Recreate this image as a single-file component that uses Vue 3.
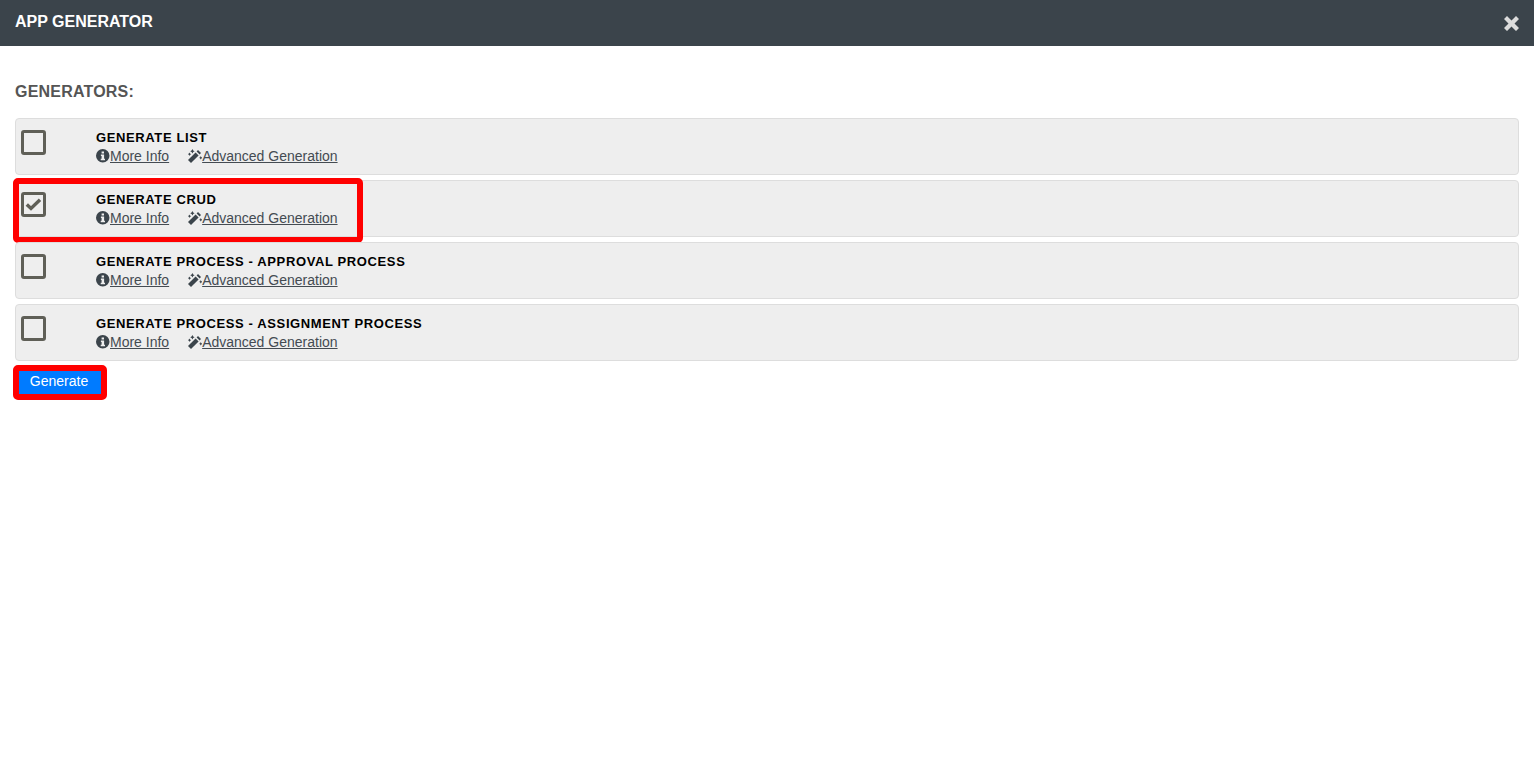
<script setup>
const generators = [
  { name: 'GENERATE LIST', checked: false },
  { name: 'GENERATE CRUD', checked: true, marked: true },
  { name: 'GENERATE PROCESS - APPROVAL PROCESS', checked: false },
  { name: 'GENERATE PROCESS - ASSIGNMENT PROCESS', checked: false },
]
</script>

<template>
  <div class="page">
    <header class="topbar">
      <h1 class="title">APP GENERATOR</h1>
      <svg class="close" viewBox="0 0 16 16" width="15" height="15">
        <path d="M0 3.2 3.2 0 8 4.8 12.8 0 16 3.2 11.2 8 16 12.8 12.8 16 8 11.2 3.2 16 0 12.8 4.8 8 0 3.2Z" />
      </svg>
    </header>

    <main class="body">
      <h2 class="section">GENERATORS:</h2>

      <div v-for="g in generators" :key="g.name" class="row">
        <span class="check">
          <svg v-if="g.checked" viewBox="0 0 19 19" width="19" height="19">
            <path d="M2.8 9.4 7 13.4 16 4.8" fill="none" stroke="#5f5f57" stroke-width="3.4" />
          </svg>
        </span>
        <div class="info">
          <div class="name">{{ g.name }}</div>
          <div class="links">
            <span class="link-item">
              <svg class="icon" viewBox="0 0 14 14" width="14" height="14">
                <path fill-rule="evenodd" d="M6.75 0a6.75 6.75 0 1 0 0 13.5A6.75 6.75 0 0 0 6.75 0ZM5.6 2.4h2.4v2.1H5.6V2.4ZM4.9 5.6h3.2v4.2h.9v1.5H4.7V9.8h.9V7.1h-.7V5.6Z" />
              </svg><a class="link">More Info</a>
            </span>
            <span class="link-item">
              <svg class="icon" viewBox="0 0 14 14" width="14" height="14">
                <path d="M0 11 7.6 3.4l3 3L3 14 0 11Z" />
                <path d="M8.6 2.4 10 1l3 3-1.4 1.4-3-3Z" />
                <path d="M3.6 1.4 4.4 0l.8 1.4 1.4.8-1.4.8-.8 1.4-.8-1.4-1.4-.8ZM.9 4.6l.6-1.1.6 1.1 1.1.6-1.1.6-.6 1.1-.6-1.1-1.1-.6ZM12.2 8.2l.6-1.1.6 1.1 1 .6-1 .6-.6 1.1-.6-1.1-1.1-.6Z" />
              </svg><a class="link">Advanced Generation</a>
            </span>
          </div>
        </div>
        <span v-if="g.marked" class="mark mark-row"></span>
      </div>

      <div class="actions">
        <button class="generate" type="button">Generate</button>
        <span class="mark mark-button"></span>
      </div>
    </main>
  </div>
</template>

<style scoped>
.page {
  width: 1534px;
  height: 782px;
  background: #fff;
  overflow: hidden;
  font-family: "Liberation Sans", Arial, sans-serif;
}

.topbar {
  height: 46px;
  background: #3b444b;
  display: flex;
  align-items: flex-start;
  justify-content: space-between;
  padding: 0 15px 0 15px;
  box-sizing: border-box;
}

.title {
  margin: 12px 0 0;
  font-size: 16px;
  line-height: 19px;
  font-weight: 700;
  color: #fff;
}

.close {
  margin-top: 16px;
  fill: #dcdcdc;
}

.body {
  padding: 0 15px;
}

.section {
  margin: 0;
  padding-top: 37px;
  height: 72px;
  box-sizing: border-box;
  font-size: 16px;
  line-height: 18px;
  font-weight: 700;
  letter-spacing: 0.2px;
  color: #555;
}

.row {
  position: relative;
  display: flex;
  height: 57px;
  box-sizing: border-box;
  margin-bottom: 5px;
  background: #eee;
  border: 1px solid #ddd;
  border-radius: 4px;
}

.check {
  flex: none;
  width: 25px;
  height: 25px;
  box-sizing: border-box;
  margin: 11px 0 0 5px;
  border: 3px solid #5f5f57;
  border-radius: 3px;
  display: block;
}

.check svg {
  display: block;
}

.info {
  margin: 11px 0 0 50px;
}

.name {
  font-size: 13px;
  line-height: 16px;
  font-weight: 700;
  letter-spacing: 0.62px;
  color: #000;
}

.links {
  display: flex;
  gap: 19px;
  margin-top: 2px;
  font-size: 14px;
  line-height: 16px;
  color: #444;
}

.link-item {
  display: flex;
  align-items: center;
}

.link {
  text-decoration: underline;
  color: #444b52;
}

.icon {
  flex: none;
  fill: #3b444b;
}

.actions {
  position: relative;
  margin: 10px 0 0 3px;
  height: 23px;
}

.generate {
  display: block;
  width: 84px;
  height: 23px;
  padding: 0 2px 2px 0;
  border: 0;
  background: #007bff;
  color: #fff;
  font-family: inherit;
  font-size: 14px;
  line-height: 21px;
}

.mark {
  position: absolute;
  box-sizing: border-box;
  border: 5px solid #f00;
  border-radius: 4px;
  pointer-events: none;
}

.mark-row {
  left: -3px;
  top: -3px;
  width: 350px;
  height: 65px;
  border-width: 6px;
  border-radius: 5px;
}

.mark-button {
  left: -5px;
  top: -6px;
  width: 94px;
  height: 35px;
  border-width: 6px;
  border-radius: 5px;
}
</style>

<style>
html, body {
  background: #fff;
}
</style>
